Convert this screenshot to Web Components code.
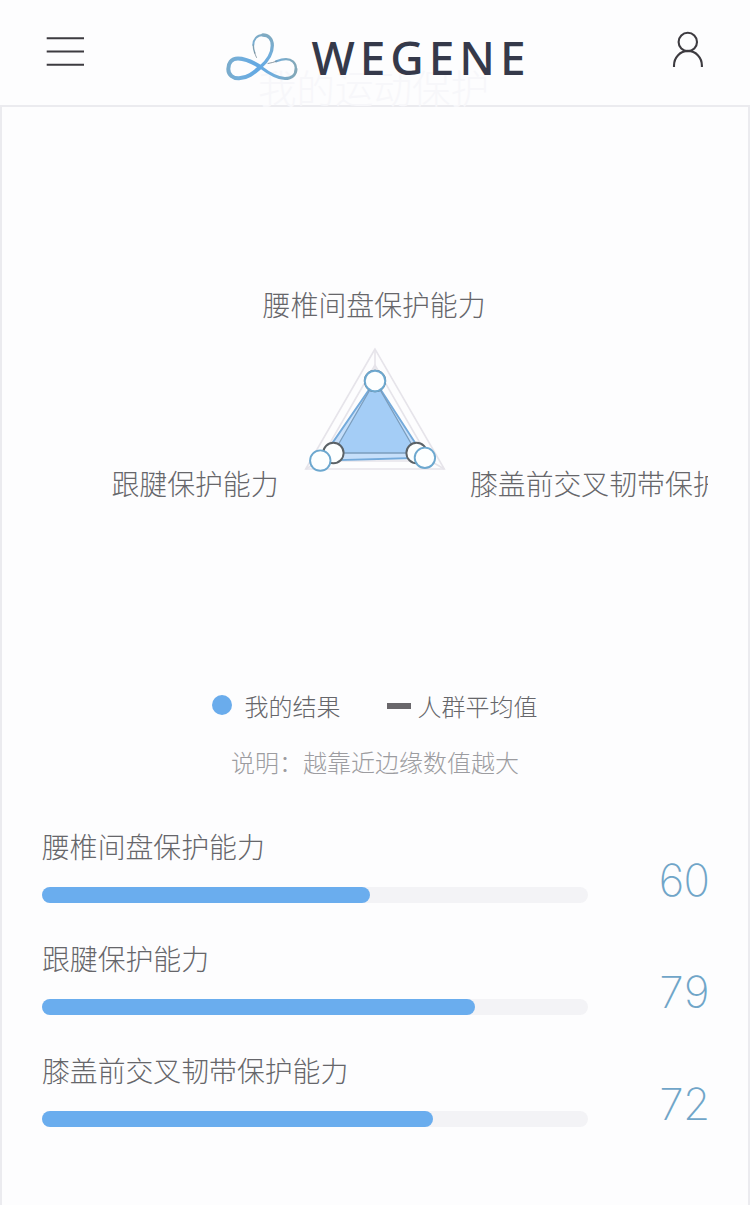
<!DOCTYPE html>
<html lang="zh-CN">
<head>
<meta charset="utf-8">
<title>WeGene</title>
<style>
  html, body { margin: 0; background: #fdfdfe; }
  body { font-family: "Noto Sans CJK SC", "Liberation Sans", sans-serif; font-weight: 300; color: #66666a; }
</style>
</head>
<body>
<report-page>
  <app-header slot="header" ghost="我的运动保护"></app-header>
  <radar-chart></radar-chart>
  <chart-legend></chart-legend>
  <chart-note>说明：越靠近边缘数值越大</chart-note>
  <score-list>
    <score-row value="60" fill="60">腰椎间盘保护能力</score-row>
    <score-row value="79" fill="79.3">跟腱保护能力</score-row>
    <score-row value="72" fill="71.6">膝盖前交叉韧带保护能力</score-row>
  </score-list>
</report-page>
<script>
  class BaseElement extends HTMLElement {
    connectedCallback() {
      if (!this.shadowRoot) this.attachShadow({ mode: 'open' }).innerHTML = this.render();
    }
  }

  customElements.define('report-page', class extends BaseElement {
    render() {
      return `<style>
        :host { display: flex; flex-direction: column; width: 750px; height: 1205px; overflow: hidden; }
        main { flex: 1; display: flex; flex-direction: column; box-sizing: border-box;
               border: 2px solid #ebebef; border-bottom: 0; padding: 0 40px; }
      </style><slot name="header"></slot><main><slot></slot></main>`;
    }
  });

  customElements.define('app-header', class extends BaseElement {
    render() {
      return `<style>
        :host { display: flex; position: relative; height: 105px; flex: none; box-sizing: border-box;
                justify-content: space-between; align-items: flex-start; padding: 30px 44px 0 45px; }
        svg { display: block; overflow: visible; }
        .ghost { position: absolute; left: 258px; top: 67px; font-size: 38.500px; line-height: 38px; color: #f7f7fa; white-space: nowrap; }
        .logo, .icon { position: relative; }
        .logo { margin-right: 4px; }
      </style>
      <div class="ghost">${this.getAttribute('ghost')}</div>
      <svg class="icon" width="40" height="40" viewBox="45 30 40 40" stroke="#3d3b40" stroke-width="2.1">
        <path d="M46.700 38.200H84M46.700 51.500H84M46.700 64.800H84"/>
      </svg>
      <svg class="logo" width="302" height="56" viewBox="225 30 302 56">
        <defs>
          <radialGradient id="g" gradientUnits="userSpaceOnUse" cx="256" cy="68" r="40">
            <stop offset="0" stop-color="#61a8e4"/><stop offset=".5" stop-color="#72aedb"/><stop offset="1" stop-color="#83a8b8"/>
          </radialGradient>
        </defs>
        <g fill="none" stroke="url(#g)" stroke-linecap="round" stroke-linejoin="round">
          <path stroke-width="4" d="M260.500 67C251 61 245 58.500 238 58.500C231 58.500 228.300 63.500 228.300 69C228.300 75 233 78.500 239 78.300C248 78 254 72.500 260.500 67"/>
          <path stroke-width="3.300" d="M260.500 67C268 60.500 272.300 52.500 272.300 45.500C272.300 38.500 268 35 262.800 35"/>
          <path stroke-width="2" d="M262.800 35C257 35 253.300 39.500 253.300 45"/>
          <path stroke-width="1.400" stroke="#7e9fb2" d="M253.300 45C253.300 48 254 51 254.800 53"/>
          <path stroke-width=".8" stroke="#7e8f9a" d="M254.600 52.500Q255.300 55 256.500 57.500"/>
          <path stroke-width="3" d="M260.500 67C269 73.500 277 78.500 285 78.500C292 78.500 296 74.500 296 69"/>
          <path stroke-width="2.200" d="M296 69C296 62.500 291.500 59.200 286 59.200C282 59.200 278.500 60.500 276 61.400"/>
          <path stroke-width=".9" stroke="#7e8f9a" d="M277 61Q273 62.700 268 63.500"/>
        </g>
        <text x="311.500" y="74.700" font-family="Noto Sans, sans-serif" font-weight="500" font-size="46" textLength="214" lengthAdjust="spacing" fill="#35394a">WEGENE</text>
      </svg>
      <svg class="icon" width="36" height="40" viewBox="670 30 36 40" fill="none" stroke="#3d3b40" stroke-width="2.100">
        <circle cx="687.800" cy="42" r="9.200"/>
        <path d="M674 67V65.500A13.850 14.500 0 0 1 701.900 65.500V67"/>
      </svg>`;
    }
  });

  customElements.define('radar-chart', class extends BaseElement {
    /* Vertices of a triangle whose axes point up, lower left and lower right. */
    triangle(values) {
      const angles = [-90, 150, 30];
      return values.map((v, i) => {
        const a = angles[i] * Math.PI / 180, r = v * 0.8;
        return [(375 + r * Math.cos(a)).toFixed(1), (429 + r * Math.sin(a)).toFixed(1)];
      });
    }
    render() {
      const mine = this.triangle([60, 79, 72]);
      const mean = this.triangle([60, 60, 60]);
      const dots = (pts, color) => pts.map(([x, y]) => `<circle cx="${x}" cy="${y}" r="10.200" fill="#fdffff" stroke="${color}" stroke-width="1.900"/>`).join('');
      const rings = [100, 80].map(v => `<polygon points="${this.triangle([v, v, v])}" fill="none"/>`).join('');
      return `<style>
        :host { display: block; height: 570px; flex: none; overflow: hidden; }
        svg { display: block; }
        text { font-size: 27.850px; fill: #66666a; }
      </style>
      <svg width="666" height="570" viewBox="42 107 666 570">
        <g stroke="#e6e4ea" stroke-width="1.600">${rings}<path d="M375 429V349M375 429L305.700 469M375 429L444.300 469"/></g>
        <polygon points="${mean}" fill="#b9d8f7"/>
        <polygon points="${mine}" fill="#8fc1f5" fill-opacity=".5" stroke="#74aadb" stroke-width="1.900"/>
        <polygon points="${mean}" fill="none" stroke="#7b9dbd" stroke-width="1.300"/>
        ${dots(mean, '#5b6267')}${dots(mine, '#6da8cf')}
        <text x="262.800" y="315.500">腰椎间盘保护能力</text>
        <text x="111.500" y="494.500">跟腱保护能力</text>
        <text x="470" y="494.500">膝盖前交叉韧带保护能力</text>
      </svg>`;
    }
  });

  customElements.define('chart-legend', class extends BaseElement {
    render() {
      return `<style>
        :host { display: flex; height: 58px; flex: none; align-items: center; padding-left: 170px; font-size: 24px; line-height: 36px; }
        i { display: block; }
        .dot { width: 20px; height: 20px; border-radius: 50%; background: #6aacec; margin-right: 12.500px; position: relative; top: -1px; }
        .dash { width: 24px; height: 6px; background: #69676b; margin: 0 6.500px 0 46.500px; }
      </style><i class="dot"></i><span>我的结果</span><i class="dash"></i><span>人群平均值</span>`;
    }
  });

  customElements.define('chart-note', class extends BaseElement {
    render() {
      return `<style>
        :host { display: block; height: 36px; flex: none; margin-top: 9px; text-align: center; font-size: 24px; line-height: 36px; color: #9c9ca0; }
      </style><slot></slot>`;
    }
  });

  customElements.define('score-list', class extends BaseElement {
    render() {
      return `<style>:host { display: flex; flex-direction: column; margin-top: 46px; }</style><slot></slot>`;
    }
  });

  customElements.define('score-row', class extends BaseElement {
    render() {
      return `<style>
        :host { display: grid; grid-template-columns: 546px 1fr; height: 112px; align-items: start; }
        .name { font-size: 27.850px; line-height: 40px; height: 61px; }
        .track { height: 16px; border-radius: 8px; background: #f3f3f6; }
        .fill { height: 16px; width: ${this.getAttribute('fill')}%; border-radius: 8px; background: #6aadee; }
        .value { font: 200 44px/52px Inter, sans-serif; font-variant-numeric: tabular-nums; color: #70a5c8;
                 text-align: right; padding-top: 28px; letter-spacing: -3px; }
      </style>
      <div><div class="name"><slot></slot></div><div class="track"><div class="fill"></div></div></div>
      <div class="value">${this.getAttribute('value')}</div>`;
    }
  });
</script>
</body>
</html>
